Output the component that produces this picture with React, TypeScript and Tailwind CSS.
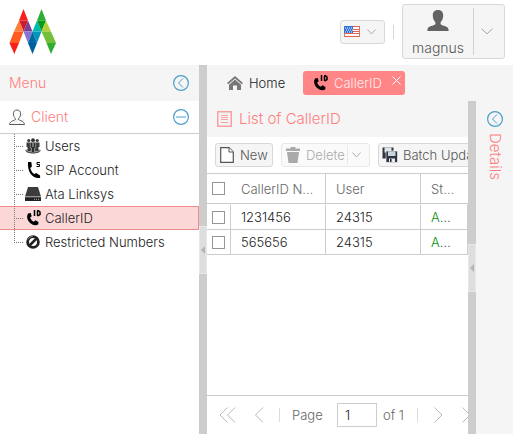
import { useState } from "react";
import type { ReactNode } from "react";

const clients: { label: string; icon: ReactNode }[] = [
  { label: "Users", icon: <UsersIcon /> },
  { label: "SIP Account", icon: <PhoneIcon tag="S" /> },
  { label: "Ata Linksys", icon: <DriveIcon /> },
  { label: "CallerID", icon: <PhoneIcon tag="ID" /> },
  { label: "Restricted Numbers", icon: <BanIcon /> },
];

const rows = [
  { number: "1231456", user: "24315" },
  { number: "565656", user: "24315" },
];

function Logo() {
  return (
    <svg width="48" height="46" viewBox="0 0 48 46" role="img" aria-label="Magnus">
      <path d="M14.500 0 19 11.500H10z" fill="#fb1e1c" />
      <path d="M10 11.500h9L14.500 22.500z" fill="#cf1a2c" />
      <path d="M10 11.500 14.500 22.500H5z" fill="#ff7f3a" />
      <path d="M5 22.500h9.500L10 34H.500z" fill="#ff5a20" />
      <path d="M.500 34H10L5.300 45z" fill="#fb1e1c" />
      <path d="M19 11.500 23.500 22.500h-9z" fill="#7b3f98" />
      <path d="M14.500 22.500h9L19 34z" fill="#8676cf" />
      <path d="M28 11.500 32.500 22.500h-9z" fill="#00b9b4" />
      <path d="M23.500 22.500h9L28 34z" fill="#0096b8" />
      <path d="M23.500 22.500 28 34h-9z" fill="#0068a6" />
      <path d="M19 34h9L23.500 45z" fill="#00609c" />
      <path d="M32.500 0 37 11.500h-9z" fill="#2fae35" />
      <path d="M28 11.500h9L32.500 22.500z" fill="#059b22" />
      <path d="M37 11.500 42 22.500h-9.500z" fill="#b3cf3a" />
      <path d="M32.500 22.500H42L47 34h-9.500z" fill="#73bf39" />
      <path d="M37.500 34H47L42 45z" fill="#2fae35" />
    </svg>
  );
}

function Flag() {
  return (
    <svg width="16" height="11" viewBox="0 0 16 11" aria-hidden="true">
      <path d="M0 0h16v11H0z" fill="#fff" />
      <path d="M0 .500h16M0 3.500h16M0 5.500h16M0 7.500h16M0 10.500h16" stroke="#e2604f" />
      <path d="M.500.500v10M15.500.500v10" stroke="#d07a62" />
      <path d="M0 0h9v7H0z" fill="#2f6fd8" />
      <path d="M1 2h8M2 4h7M1 6h8" stroke="#fff" strokeDasharray="1 1" />
    </svg>
  );
}

function Chevron({ wide = false }: { wide?: boolean }) {
  return wide ? (
    <svg width="12" height="7" viewBox="0 0 12 7" fill="none" stroke="#a5a5a5" aria-hidden="true">
      <path d="m.500.800 5.500 5 5.500-5" />
    </svg>
  ) : (
    <svg width="9" height="6" viewBox="0 0 9 6" fill="none" stroke="#adadad" aria-hidden="true">
      <path d="m.500.500 4 4.500 4-4.500" />
    </svg>
  );
}

function PersonIcon() {
  return (
    <svg width="22" height="21" viewBox="0 0 22 21" fill="#636363" aria-hidden="true">
      <path d="M11 0c3.500 0 5.300 2.200 5.200 5.500 0 3-1.200 5.400-2.600 6.800v2c1.800 1.500 6.900 2 7.700 4.200l.400 2.500H.300l.400-2.500c.800-2.200 5.900-2.700 7.700-4.200v-2C7 10.900 5.800 8.500 5.800 5.500 5.700 2.200 7.500 0 11 0z" />
    </svg>
  );
}

function ClientIcon() {
  return (
    <svg width="16" height="17" viewBox="0 0 16 17" fill="none" stroke="#5a5a5a" aria-hidden="true">
      <path d="M4 15 15 4M10 15l5-5" stroke="#ececec" strokeWidth="1.500" />
      <path d="M8 1c2.300 0 3.600 1.400 3.600 3.800 0 2-.900 3.700-2 4.600v1.200c1.200 1 5.400 1.200 5.900 4.900H.500c.500-3.700 4.700-3.900 5.900-4.900V9.400c-1.100-.900-2-2.600-2-4.600C4.400 2.400 5.700 1 8 1z" />
    </svg>
  );
}

function CircleIcon({ kind }: { kind: "left" | "minus" }) {
  return (
    <svg width="16" height="16" viewBox="0 0 16 16" fill="none" stroke="#4b9fcb" aria-hidden="true">
      <circle cx="8" cy="8" r="7.400" strokeWidth="1.200" />
      {kind === "left" ? <path d="M10 3.500 5.500 8l4.500 4.500" /> : <path d="M3 8h10" />}
    </svg>
  );
}

function UsersIcon() {
  return (
    <svg width="16" height="16" viewBox="0 0 16 16" aria-hidden="true">
      <ellipse cx="8" cy="12.800" rx="7.600" ry="2.700" fill="#999" />
      <g fill="#3a3a3a">
        <circle cx="3.800" cy="2.500" r="1.600" />
        <circle cx="12.200" cy="2.500" r="1.600" />
        <path d="M1.500 4.500H6V13H2.700V9.500L1.500 9zM10 4.500h4.500V9l-1.200.500V13H10z" />
      </g>
      <circle cx="8" cy="2.200" r="1.900" fill="#2c2c2c" />
      <path d="M5.300 4.300h5.400v5.200l-1 .500v4.500H6.300V10l-1-.500z" fill="#2c2c2c" stroke="#ddd" strokeWidth=".5" />
      <path d="M8 5v4" stroke="#eee" strokeWidth=".8" />
      <path d="M.800 12.500c1.500 3.200 12.900 3.200 14.400 0" fill="none" stroke="#444" />
    </svg>
  );
}

function PhoneIcon({ tag }: { tag: "S" | "ID" }) {
  return (
    <svg width="16" height="16" viewBox="0 0 16 16" aria-hidden="true">
      {tag === "S" ? (
        <>
          <path d="M3 0h3.300l.600 4.500L5.300 6c.500 2.600 2 4.900 4 6l1.800-1 4 2.500V16h-2.600C6.500 15.500 2.300 9 3 0z" />
          <path d="M15 .500h-3v2h2.500v2H11.500" fill="none" stroke="#000" />
        </>
      ) : (
        <>
          <path d="M3 3.500 5.700 3l1 3.200-1.600 1.300c.700 2 1.800 3.300 3.700 4.200l1.600-1.400 3.100 1.700-.300 2.500C7 17.500-.500 9.500 3 3.500z" />
          <path d="M9.500 0v6M12.500 1v4.500M12 .700h1.500L15 2v2.500l-1.500 1H12" fill="none" stroke="#000" strokeWidth="1.500" />
        </>
      )}
    </svg>
  );
}

function DriveIcon() {
  return (
    <svg width="16" height="16" viewBox="0 0 16 16" aria-hidden="true">
      <path d="M3 1h10l3 9.500H0z" fill="#3c3c3c" />
      <path d="M0 11h16v4H0z" fill="#222" />
      <path d="M0 11h16" stroke="#888" strokeWidth=".8" />
      <path d="M9 13.300h6" stroke="#aaa" strokeDasharray="1 1" />
    </svg>
  );
}

function BanIcon() {
  return (
    <svg width="16" height="16" viewBox="0 0 16 16" fill="none" aria-hidden="true">
      <circle cx="8" cy="8" r="5.400" stroke="#222" strokeWidth="2.800" />
      <path d="M4.500 11.500l7-7" stroke="#222" strokeWidth="2.500" />
      <path d="M3 5.500A6 6 0 0 1 8 2" stroke="#888" />
    </svg>
  );
}

function HomeIcon() {
  return (
    <svg width="16" height="14" viewBox="0 0 16 14" fill="#777" aria-hidden="true">
      <path d="M8 0 16 7l-1.200 1.300L8 2.500 1.200 8.300 0 7z" />
      <path d="M8 3.600 14 8.700V14h-4V9.500H6V14H2V8.700z" />
    </svg>
  );
}

function ListIcon() {
  return (
    <svg width="15" height="16" viewBox="0 0 15 16" fill="none" stroke="#ff9ea0" aria-hidden="true">
      <rect x=".75" y=".75" width="13.500" height="14.500" strokeWidth="1.500" />
      <path d="M4 4.500h7M4 6.500h7M4 8.500h7M4 11.500h7" />
    </svg>
  );
}

function FileIcon() {
  return (
    <svg width="14" height="16" viewBox="0 0 14 16" fill="#fff" stroke="#555" aria-hidden="true">
      <path d="M.700.700H9L13.300 5v10.300H.700z" strokeWidth="1.200" />
      <path d="M9 .700V5h4.300" />
    </svg>
  );
}

function TrashIcon() {
  return (
    <svg width="14" height="16" viewBox="0 0 14 16" fill="#aaa" aria-hidden="true">
      <path d="M0 1.500h4.500V0h5v1.500H14V4H0zM1 5h12l-1.500 11h-9z" />
    </svg>
  );
}

function SaveAllIcon() {
  return (
    <svg width="16" height="16" viewBox="0 0 16 16" aria-hidden="true">
      <path d="M.500.500h11v11H.500z" fill="#2f3540" />
      <path d="M2.500.500h7v5h-7z" fill="#dfe4ea" />
      <path d="M4 4h11.500v11.500H5L4 14.500z" fill="#2f3540" stroke="#fff" strokeWidth=".6" />
      <path d="M6 4.300h7.500V9H6z" fill="#c9d4df" />
      <path d="M7 11.500h6V15H7z" fill="#e8ebef" />
      <path d="M8 12h1.500v3H8z" fill="#222" />
    </svg>
  );
}

function Collapser({ className }: { className: string }) {
  return (
    <div className="w-2 shrink-0 bg-[#cdcdcd]">
      <button
        aria-label="Collapse panel"
        className={`flex h-12 w-2 items-center justify-center border border-[#e8e8e8] bg-[#dedede] ${className}`}
      >
        <svg width="4" height="8" viewBox="0 0 4 8" aria-hidden="true">
          <path d="M4 0v8L0 4z" fill="#b4b4b4" />
        </svg>
      </button>
    </div>
  );
}

function Tick({ label }: { label: string }) {
  return (
    <input
      type="checkbox"
      aria-label={label}
      className="block size-[13px] appearance-none border border-[#969696] bg-white checked:bg-[#ff8586]"
    />
  );
}

function Arrow({ d, label, width }: { d: string; label: string; width: number }) {
  return (
    <button aria-label={label} className="shrink-0">
      <svg width={width} height="16" viewBox={`0 0 ${width} 16`} fill="none" stroke="#b8b8b8">
        <path d={d} />
      </svg>
    </button>
  );
}

export default function App() {
  const [page, setPage] = useState("1");
  const [selected, setSelected] = useState("CallerID");
  return (
    <div className="flex h-screen flex-col overflow-hidden bg-white font-['Inter',sans-serif] text-[13px] leading-4 font-light text-[#222] [&_svg]:shrink-0">
      <header className="flex h-[65px] shrink-0 items-start justify-between pr-2 pl-[9px]">
        <div className="pt-[9px]">
          <Logo />
        </div>
        <div className="flex items-center pt-1">
          <button
            aria-label="Language"
            className="flex h-6 w-[45px] items-center justify-between rounded-[3px] border border-[#d8d8d8] bg-[#f5f5f5] pr-2 pl-[3px]"
          >
            <Flag />
            <Chevron />
          </button>
          <span className="mx-2 h-[14px] w-px bg-[#d8d8d8]" />
          <button className="flex h-[55px] w-[103px] items-center rounded-[3px] border border-[#d8d8d8] bg-[#f5f5f5] text-[14px] text-[#555]">
            <span className="flex flex-1 flex-col items-center gap-[7px] pt-1">
              <PersonIcon />
              <span className="leading-5">magnus</span>
            </span>
            <span className="flex h-[47px] w-[31px] items-center justify-center border-l border-[#d0d0d0] pr-1">
              <Chevron wide />
            </span>
          </button>
        </div>
      </header>

      <div className="flex min-h-0 flex-1">
        <nav className="w-[199px] shrink-0">
          <div className="flex h-9 items-center justify-between bg-[#f5f5f5] pr-[10px] pl-[9px] text-[14px] text-[#ff7f80]">
            <h2>Menu</h2>
            <button aria-label="Collapse menu">
              <CircleIcon kind="left" />
            </button>
          </div>
          <button className="flex h-[33px] w-full items-center gap-[6px] border-b border-[#cdcdcd] pr-[10px] pl-[9px] text-[14px] text-[#ff7f80]">
            <ClientIcon />
            <span className="flex-1 text-left">Client</span>
            <CircleIcon kind="minus" />
          </button>
          <ul>
            {clients.map((item, i) => (
              <li key={item.label}>
                <button
                  onClick={() => setSelected(item.label)}
                  className={`flex h-6 w-full items-center border-y border-r text-left ${
                    selected === item.label ? "border-[#f58a8b] bg-[#fcd7d8]" : "border-transparent"
                  }`}
                >
                  <svg width="25" height="24" className="-my-px" stroke="#777" strokeDasharray="1 1" aria-hidden="true">
                    <path d={i === clients.length - 1 ? "M14.500 0v12" : "M14.500 0v24"} />
                    <path d="M14 12.500h9" />
                  </svg>
                  {item.icon}
                  <span className="pl-1">{item.label}</span>
                </button>
              </li>
            ))}
          </ul>
        </nav>

        <Collapser className="mt-[161px]" />

        <main className="flex min-w-0 flex-1 flex-col bg-[#f5f5f5]">
          <div className="flex h-9 shrink-0 items-center pl-5">
            <button className="flex w-[76px] items-center gap-[6px]">
              <HomeIcon />
              Home
            </button>
            <div className="flex h-6 w-[102px] items-center rounded-[3px] bg-[#ff8586] pr-1 pl-[9px] text-[#ffecec]">
              <button className="flex flex-1 items-center gap-[6px]">
                <PhoneIcon tag="ID" />
                CallerID
              </button>
              <button aria-label="Close tab" className="mb-[6px]">
                <svg width="9" height="9" viewBox="0 0 9 9" stroke="#fff" aria-hidden="true">
                  <path d="m.500.500 8 8M8.500.500l-8 8" />
                </svg>
              </button>
            </div>
          </div>

          <div className="flex min-h-0 flex-1">
            <section className="flex min-w-0 flex-1 flex-col overflow-hidden bg-white">
              <div className="flex h-9 shrink-0 items-center gap-[7px] bg-[#f5f5f5] pl-[10px] text-[15px] text-[#ff7f80]">
                <ListIcon />
                <h1>List of CallerID</h1>
              </div>
              <div className="flex h-9 shrink-0 items-center gap-2 pl-2 whitespace-nowrap text-[#555]">
                <button className="flex h-6 w-[58px] shrink-0 items-center gap-[6px] rounded-[3px] border border-[#d8d8d8] bg-[#f5f5f5] pl-1">
                  <FileIcon />
                  New
                </button>
                <button
                  disabled
                  className="flex h-6 w-[89px] shrink-0 items-center justify-between rounded-[3px] border border-[#e8e8e8] bg-[#fafafa] pl-1 text-[#aaa]"
                >
                  <span className="flex items-center gap-[6px]">
                    <TrashIcon />
                    Delete
                  </span>
                  <span className="flex h-5 w-[22px] items-center justify-center border-l border-[#e8e8e8] pr-1">
                    <Chevron />
                  </span>
                </button>
                <button className="flex h-6 shrink-0 items-center gap-[5px] rounded-[3px] border border-[#d8d8d8] bg-[#f5f5f5] px-[3px]">
                  <SaveAllIcon />
                  Batch Update
                </button>
              </div>

              <div className="min-h-0 flex-1">
                <table className="w-full table-fixed border-separate border-spacing-0">
                  <colgroup>
                    <col className="w-6" />
                    <col className="w-[95px]" />
                    <col className="w-[95px]" />
                    <col />
                  </colgroup>
                  <thead>
                    <tr className="h-[31px] text-left text-[#666] [&>th]:border-y [&>th]:border-[#cdcdcd] [&>th]:p-0 [&>th]:font-light">
                      <th>
                        <span className="block pl-[5px]">
                          <Tick label="Select all" />
                        </span>
                      </th>
                      <th className="border-r">
                        <span className="block truncate px-[10px]">CallerID Number</span>
                      </th>
                      <th className="border-r">
                        <span className="block truncate px-[10px]">User</span>
                      </th>
                      <th>
                        <span className="block truncate px-[10px]">Status</span>
                      </th>
                    </tr>
                  </thead>
                  <tbody>
                    {rows.map((row) => (
                      <tr
                        key={row.number}
                        className="h-[25px] first:h-[26px] [&>td]:border-r [&>td]:border-b [&>td]:border-[#cdcdcd] [&>td]:p-0 first:[&>td]:border-t first:[&>td]:border-t-white"
                      >
                        <td>
                          <span className="block pl-[5px]">
                            <Tick label={`Select ${row.number}`} />
                          </span>
                        </td>
                        <td>
                          <span className="block px-[10px]">{row.number}</span>
                        </td>
                        <td>
                          <span className="block px-[10px]">{row.user}</span>
                        </td>
                        <td>
                          <span className="block truncate px-[10px]">
                            <span className="text-[#0a8f0a]">Active</span>
                          </span>
                        </td>
                      </tr>
                    ))}
                  </tbody>
                </table>
              </div>

              <footer className="flex h-[39px] shrink-0 items-center border-t border-[#cdcdcd] pl-3 whitespace-nowrap text-[#666]">
                <Arrow label="First page" width={17} d="M8.500.500 1 8l7.500 7.500M16 .500 8.500 8l7.500 7.500" />
                <span className="w-[18px] shrink-0" />
                <Arrow label="Previous page" width={10} d="M9 .500 1.500 8 9 15.500" />
                <span className="mr-3 ml-[15px] h-[14px] w-px shrink-0 bg-[#dcdcdc]" />
                <label htmlFor="page" className="w-[45px] shrink-0">
                  Page
                </label>
                <input
                  id="page"
                  value={page}
                  onChange={(e) => setPage(e.target.value)}
                  className="h-6 w-10 shrink-0 border border-[#cdcdcd] bg-white px-[7px] text-[#222] outline-none"
                />
                <span className="w-10 shrink-0 pl-[6px]">of 1</span>
                <span className="mr-[15px] h-[14px] w-px shrink-0 bg-[#dcdcdc]" />
                <Arrow label="Next page" width={10} d="M1.500.500 9 8l-7.500 7.500" />
                <span className="w-[18px] shrink-0" />
                <Arrow label="Last page" width={17} d="M1.500.500 9 8l-7.500 7.500M9 .500 16.500 8 9 15.500" />
              </footer>
            </section>

            <Collapser className="mt-[143px]" />

            <aside className="flex w-[37px] shrink-0 flex-col items-center gap-[6px] pt-[10px] text-[15px] text-[#ff7f80]">
              <button aria-label="Expand details">
                <CircleIcon kind="left" />
              </button>
              <h2 className="[writing-mode:vertical-rl]">Details</h2>
            </aside>
          </div>
        </main>
      </div>
    </div>
  );
}
